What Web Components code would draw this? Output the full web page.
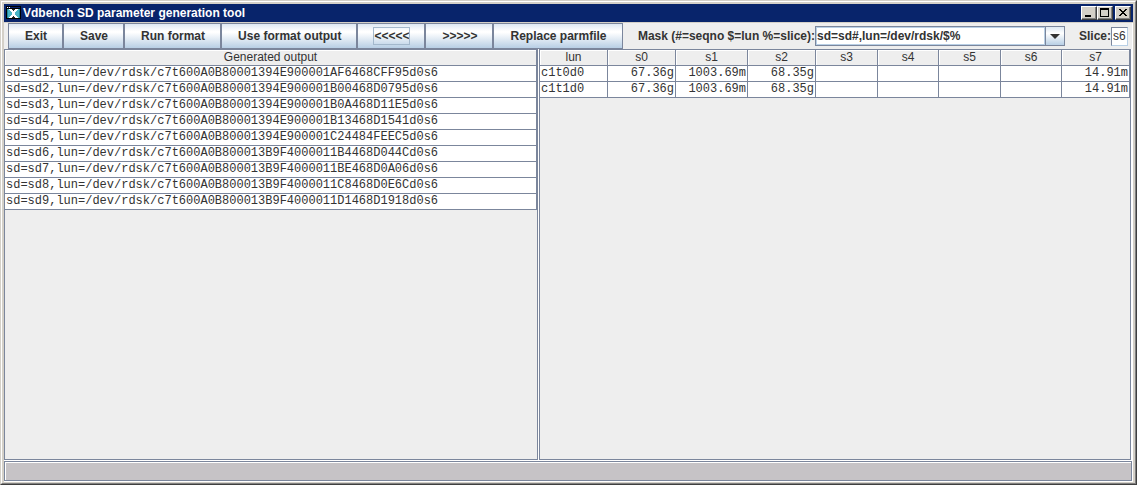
<!DOCTYPE html>
<html lang="en">
<head>
<meta charset="utf-8">
<title>Vdbench SD parameter generation tool</title>
<style>
html,body{height:100%;margin:0}
body{font:12px/16px "Liberation Sans",Arial,sans-serif;color:#333;--line:#7b869c;--panel:#eee;--face:#d4d0c8}
</style>
</head>
<body>
<vd-window caption="Vdbench SD parameter generation tool">
  <vd-toolbar slot="toolbar">
    <vd-button>Exit</vd-button><vd-button>Save</vd-button><vd-button>Run format</vd-button><vd-button>Use format output</vd-button><vd-button active>&lt;&lt;&lt;&lt;&lt;</vd-button><vd-button>&gt;&gt;&gt;&gt;&gt;</vd-button><vd-button>Replace parmfile</vd-button>
    <vd-mask slot="fields"></vd-mask>
    <vd-slice slot="fields"></vd-slice>
  </vd-toolbar>
  <vd-output></vd-output>
  <vd-luns></vd-luns>
  <vd-status slot="status"></vd-status>
</vd-window>

<script>
const define = (name, markup, setup) => customElements.define(name, class extends HTMLElement {
  constructor() {
    super();
    this.attachShadow({mode: 'open'}).innerHTML = markup;
  }
  connectedCallback() { if (setup) setup(this, this.shadowRoot); }
});

define('vd-window', `<style>
:host{display:block;height:100%;box-sizing:border-box;border:1px solid;border-color:var(--face) #404040 #404040 var(--face)}
.frame{height:100%;box-sizing:border-box;border:1px solid;border-color:#fff #808080 #808080 #fff;padding:2px 2px 1px;background:var(--face);display:flex;flex-direction:column}
header{height:18px;background:#08246b;color:#fff;display:flex;align-items:center;padding:0 2px;flex:none;margin-bottom:1px}
h1{font:bold 12px/18px "Liberation Sans",Arial,sans-serif;margin:0 0 0 2px;flex:1}
header>svg{width:15px;height:14px}
.ctl{display:flex}
.ctl button{width:16px;height:14px;box-sizing:border-box;padding:0;border:1px solid;border-color:#fff #404040 #404040 #fff;background:var(--face);box-shadow:inset -1px -1px #808080;display:block}
.ctl button:last-child{margin-left:2px}
.ctl svg{display:block;width:14px;height:12px}
.client{flex:1;min-height:0;display:flex;flex-direction:column;background:var(--panel);border-right:1px solid #fff;border-bottom:1px solid #fff}
main{flex:1;min-height:0;display:grid;grid-template-columns:minmax(0,535fr) minmax(0,593fr);padding-bottom:1px;background:#fff}
</style>
<div class="frame">
<header>
<svg viewBox="0 0 15 14" shape-rendering="crispEdges" aria-hidden="true"><path d="M0 0h15v13H0z" fill="#000"/><path d="M1 1h13v1H1z" fill="#08246b"/><path d="M1 1h1v1H1zM3 1h1v1H3z" fill="#fff"/><path d="M1 3h13v9H1z" fill="#4ab5c6"/><path d="M1 3h1v9H1zM13 3h1v9h-1z" fill="#218a9c"/><path d="M6 3h3v1H8v1H7V4H6zM6 12v-1h1v-1h1v1h1v1z" fill="#222"/><path d="M3 3h3v1h1v1h1V4h1V3h3v1h-1v1h-1v1H9v3h1v1h1v1h1v1H9v-1H8v-1H7v1H6v1H3v-1h1v-1h1V9h1V6H5V5H4V4H3z" fill="#fff"/></svg>
<h1></h1>
<div class="ctl">
<button aria-label="Minimize"><svg viewBox="0 0 14 12" shape-rendering="crispEdges"><path d="M3 8h6v2H3z"/></svg></button>
<button aria-label="Maximize"><svg viewBox="0 0 14 12" shape-rendering="crispEdges"><path fill-rule="evenodd" d="M2 1h9v9H2zM3 3v6h7V3z"/></svg></button>
<button aria-label="Close"><svg viewBox="0 0 14 12" shape-rendering="crispEdges"><path d="M3 2h2v1h1v1h2V3h1V2h2v1h-1v1H9v1H8v1h1v1h1v1h1v1H9V8H8V7H6v1H5v1H3V8h1V7h1V6h1V5H5V4H4V3H3z"/></svg></button>
</div>
</header>
<div class="client"><slot name="toolbar"></slot><main><slot></slot></main><slot name="status"></slot></div>
</div>`, (el, root) => { root.querySelector('h1').textContent = el.getAttribute('caption'); });

define('vd-toolbar', `<style>
:host{display:flex;justify-content:space-between;align-items:center;height:26px;padding:0 4px;flex:none}
div{display:flex;align-items:center}
.fields{gap:14px}
</style><div><slot></slot></div><div class="fields"><slot name="fields"></slot></div>`);

define('vd-button', `<style>
:host{display:block}
button{display:block;height:26px;box-sizing:border-box;font:bold 12px/16px "Liberation Sans",Arial,sans-serif;color:#333;padding:0 15px 0 16px;border:1px solid var(--line);background:linear-gradient(#dde8f3,#fff 30%,#fff 35%,#b8cfe5);white-space:nowrap}
span{display:block}
:host([active]) span{outline:1px solid #a3b8cc}
</style><button><span><slot></slot></span></button>`);

define('vd-mask', `<style>
:host{display:flex;align-items:center}
label{font-weight:bold;white-space:nowrap}
.combo{display:flex;width:250px;height:20px;box-sizing:border-box;border:1px solid var(--line);background:#fff}
input{flex:1;min-width:0;border:1px solid #b8cfe5;padding:0;font:bold 12px/16px "Liberation Sans",Arial,sans-serif;color:#333;outline:0;background:#fff}
button{width:19px;border:0;border-left:1px solid var(--line);padding:0;background:linear-gradient(#dde8f3,#fff 35%,#b8cfe5)}
svg{display:block;margin:auto;width:10px;height:5px}
</style><label for="mask">Mask (#=seqno $=lun %=slice):</label><div class="combo"><input id="mask" value="sd=sd#,lun=/dev/rdsk/$%"><button aria-label="Show masks"><svg viewBox="0 0 10 5"><path d="M0 0h10L5 5z" fill="#333"/></svg></button></div>`);

define('vd-slice', `<style>
:host{display:flex;align-items:center}
label{font-weight:bold}
input{width:17px;height:19px;box-sizing:border-box;border:1px solid var(--line);border-right-color:#b8cfe5;border-bottom-color:#b8cfe5;padding:0 0 0 1px;font:12px/16px "Liberation Sans",Arial,sans-serif;color:#333;background:#fff}
</style><label for="slice">Slice:</label><input id="slice" value="s6">`);

const tableStyle = `
:host{display:block;box-sizing:border-box;border:1px solid var(--line);background:var(--panel)}
table{width:100%;border-collapse:separate;border-spacing:0;table-layout:fixed}
th{font:12px/15px "Liberation Sans",Arial,sans-serif;height:15px;padding:0;border-right:1px solid var(--line);border-bottom:1px solid var(--line);box-shadow:inset 1px 1px #fff}
td{font:12px/15px "Liberation Mono","Courier New",monospace;height:15px;padding:0 1px;border-right:1px solid var(--line);border-bottom:1px solid var(--line);background:#fff;white-space:nowrap;overflow:hidden}`;

define('vd-output', `<style>${tableStyle}
:host{margin-right:1px}
</style><table><thead><tr><th>Generated output</th></tr></thead><tbody></tbody></table>`, (el, root) => {
  const luns = ['c7t600A0B80001394E900001AF6468CFF95d0s6','c7t600A0B80001394E900001B00468D0795d0s6','c7t600A0B80001394E900001B0A468D11E5d0s6','c7t600A0B80001394E900001B13468D1541d0s6','c7t600A0B80001394E900001C24484FEEC5d0s6','c7t600A0B800013B9F4000011B4468D044Cd0s6','c7t600A0B800013B9F4000011BE468D0A06d0s6','c7t600A0B800013B9F4000011C8468D0E6Cd0s6','c7t600A0B800013B9F4000011D1468D1918d0s6'];
  root.querySelector('tbody').innerHTML = luns.map((lun, i) => `<tr><td>sd=sd${i + 1},lun=/dev/rdsk/${lun}</td></tr>`).join('');
});

define('vd-luns', `<style>${tableStyle}
:host{margin-right:1px}
td:not(:first-child){text-align:right}
</style><table><colgroup></colgroup><thead><tr></tr></thead><tbody></tbody></table>`, (el, root) => {
  const widths = [68, 68, 72, 68, 62, 61, 62, 61, 68];
  const total = widths.reduce((a, b) => a + b);
  root.querySelector('colgroup').innerHTML = widths.map(w => `<col style="width:${w / total * 100}%">`).join('');
  root.querySelector('thead tr').innerHTML = ['lun','s0','s1','s2','s3','s4','s5','s6','s7'].map(h => `<th>${h}</th>`).join('');
  root.querySelector('tbody').innerHTML = ['c1t0d0','c1t1d0'].map(lun => '<tr>' + [lun,'67.36g','1003.69m','68.35g','','','','','14.91m'].map(c => `<td>${c}</td>`).join('') + '</tr>').join('');
});

define('vd-status', `<style>
:host{display:block;flex:none;height:20px;box-sizing:border-box;border:1px solid var(--line);background:#c6c3c6;box-shadow:inset 1px 1px #fff}
</style>`);
</script>
</body>
</html>
